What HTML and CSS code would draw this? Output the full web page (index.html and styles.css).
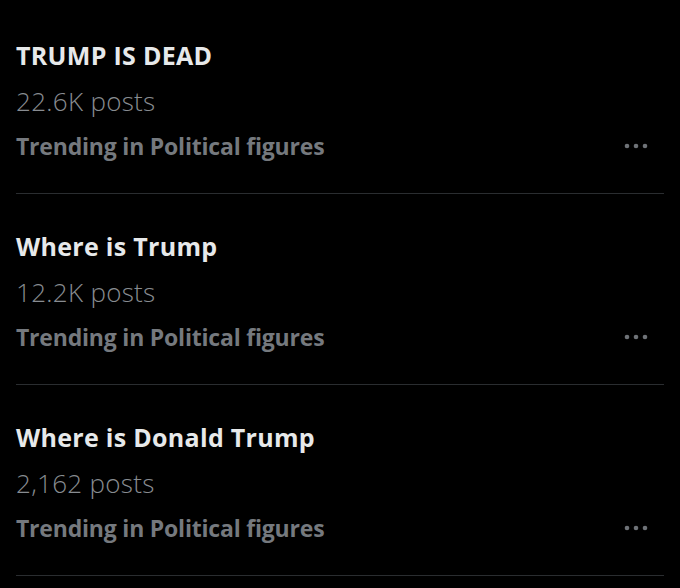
FILE: index.html
```html
<html>
	<head>
		<title>Trends</title>
		<link rel="stylesheet" href="styles.css">
	</head>
	<body>
		<div class="list">
			<div class="trend">
				<div class="info">
					<div class="title">TRUMP IS DEAD</div>
					<div class="count">22.6K posts</div>
					<div class="meta">Trending in Political figures</div>
				</div>
				<svg class="more" width="26" height="6" viewBox="0 0 26 6"><circle cx="4" cy="3" r="2.3"/><circle cx="13" cy="3" r="2.3"/><circle cx="22" cy="3" r="2.3"/></svg>
			</div>
			<div class="trend">
				<div class="info">
					<div class="title">Where is Trump</div>
					<div class="count">12.2K posts</div>
					<div class="meta">Trending in Political figures</div>
				</div>
				<svg class="more" width="26" height="6" viewBox="0 0 26 6"><circle cx="4" cy="3" r="2.3"/><circle cx="13" cy="3" r="2.3"/><circle cx="22" cy="3" r="2.3"/></svg>
			</div>
			<div class="trend">
				<div class="info">
					<div class="title">Where is Donald Trump</div>
					<div class="count">2,162 posts</div>
					<div class="meta">Trending in Political figures</div>
				</div>
				<svg class="more" width="26" height="6" viewBox="0 0 26 6"><circle cx="4" cy="3" r="2.3"/><circle cx="13" cy="3" r="2.3"/><circle cx="22" cy="3" r="2.3"/></svg>
			</div>
		</div>
	</body>
</html>
```

FILE: styles.css
```css
html, body {
	margin: 0;
	background: #000000;
	height: 100%;
}

.list {
	display: flex;
	flex-direction: column;
	padding-top: 3px;
	font-family: "Open Sans", "Liberation Sans", sans-serif;
}

.trend {
	display: flex;
	align-items: flex-end;
	justify-content: space-between;
	height: 190px;
	margin: 0 16px;
	border-bottom: 1px solid #2a2d30;
}

.info {
	display: flex;
	flex-direction: column;
	padding-bottom: 30px;
}

.title {
	color: #e7e9ea;
	font-size: 25px;
	font-weight: 700;
	line-height: 34px;
	letter-spacing: 0.3px;
}

.count {
	margin-top: 12px;
	color: #888c91;
	font-size: 26px;
	font-weight: 300;
	line-height: 34px;
	letter-spacing: 0.3px;
}

.meta {
	margin-top: 11px;
	color: #75797e;
	font-size: 23px;
	font-weight: 700;
	line-height: 34px;
	letter-spacing: -0.2px;
}

.more {
	fill: #6e7277;
	margin-right: 15px;
	margin-bottom: 44px;
}
```
